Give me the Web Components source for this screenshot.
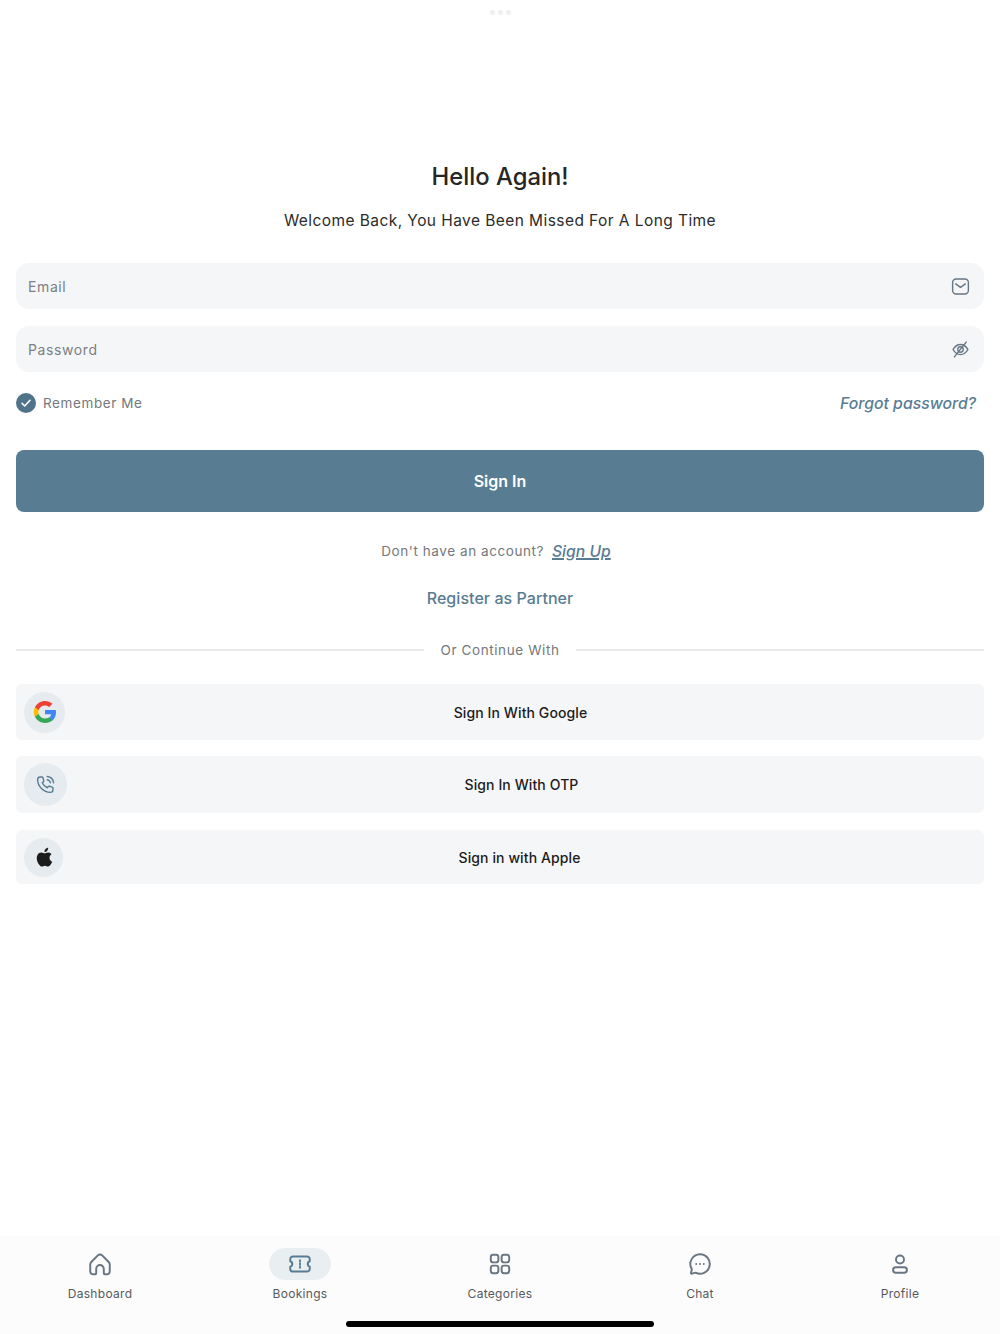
<!DOCTYPE html>
<html lang="en">
<head>
<meta charset="utf-8">
<title>Sign In</title>
<style>
  html, body { margin: 0; background: #fff; }
  body { font-family: Inter, "Liberation Sans", sans-serif; }
</style>
</head>
<body>
<login-screen></login-screen>

<script>
// Shared icon strokes, all drawn on a 24x24 grid
const ICONS = {
    mail: '<rect x="3" y="3.5" width="18" height="17" rx="4"/><path d="M6.5 9l5.5 4 5.500-4"/>',
    eyeOff: '<path d="M3.500 12c2.200-3.900 5-5.800 8.500-5.800s6.300 1.900 8.500 5.800c-2.200 3.900-5 5.800-8.500 5.800S5.700 15.900 3.500 12z"/><circle cx="12" cy="12" r="3.100"/><path d="M18.500 3.500L5 20.500"/>',
    home: '<path d="M4 10.200L10 4a2.800 2.800 0 0 1 4 0l6 6.200c.6.600 1 1.500 1 2.300V19a2.500 2.500 0 0 1-2.500 2.500H17a1.500 1.500 0 0 1-1.500-1.500v-3.500a3.500 3.500 0 0 0-7 0V20A1.500 1.500 0 0 1 7 21.500H5.500A2.500 2.500 0 0 1 3 19v-6.500c0-.8.400-1.700 1-2.300z"/>',
    ticket: '<path d="M5.500 5h13A2.500 2.500 0 0 1 21 7.500v2a2.600 2.600 0 0 0 0 5v2a2.500 2.500 0 0 1-2.500 2.500h-13A2.500 2.500 0 0 1 3 16.500v-2a2.600 2.600 0 0 0 0-5v-2A2.500 2.500 0 0 1 5.500 5z"/><path d="M12 8.500v1M12 11.300v1.400M12 14.500v1"/>',
    grid: '<rect x="3.500" y="3.500" width="7" height="7" rx="2.200"/><rect x="13.500" y="3.500" width="7" height="7" rx="2.200"/><rect x="3.500" y="13.500" width="7" height="7" rx="2.200"/><rect x="13.500" y="13.500" width="7" height="7" rx="2.200"/>',
    chat: '<path d="M12 3a9 9 0 1 1-4.100 17l-3.300.9c-.6.100-1-.300-.900-.900l.8-3.200A9 9 0 0 1 12 3z"/><path d="M8.500 12h.01M12 12h.01M15.500 12h.01"/>',
    user: '<circle cx="12" cy="7.900" r="3.700"/><rect x="5.600" y="15" width="12.800" height="5" rx="2.500"/>',
    phone: '<path d="M6 3.500l2 0c.5 0 .9.300 1 .8l1 3.300c.1.400 0 .8-.3 1.100L8.300 10c1.100 2.400 3.200 4.600 5.700 5.700l1.300-1.400c.3-.3.700-.4 1.100-.3l3.300 1c.5.100.8.500.8 1v2c0 1.700-1.300 3-3 3C10 21 3 14 3 6.500c0-1.700 1.300-3 3-3z"/><path d="M14 6.500c1.900.3 3.200 1.600 3.500 3.500M14 2.800c3.900.4 6.800 3.300 7.200 7.200"/>'
};

function strokeIcon(name, size, color, width) {
    return `<svg width="${size}" height="${size}" viewBox="0 0 24 24" fill="none" stroke="${color}" stroke-width="${width}" stroke-linecap="round" stroke-linejoin="round">${ICONS[name]}</svg>`;
}

const GOOGLE_LOGO = `<svg width="24" height="24" viewBox="0 0 48 48">
    <path fill="#4285F4" d="M46 24.500c0-1.600-.1-3.100-.4-4.500H24v8.700h12.400c-.5 2.800-2.100 5.200-4.500 6.800v5.600h7.300C43.500 36.700 46 31.100 46 24.500z"/>
    <path fill="#34A853" d="M24 46c6.100 0 11.200-2 14.900-5.500l-7.300-5.600c-2 1.400-4.600 2.200-7.600 2.200-5.900 0-10.900-4-12.600-9.300H3.800v5.800C7.500 40.900 15.200 46 24 46z"/>
    <path fill="#FBBC05" d="M11.400 27.800c-.9-2.500-.9-5.100 0-7.600v-5.800H3.800a22 22 0 0 0 0 19.200l7.600-5.800z"/>
    <path fill="#EA4335" d="M24 10.800c3.300 0 6.300 1.100 8.600 3.400l6.500-6.500C35.200 4.100 30.100 2 24 2 15.200 2 7.500 7.100 3.800 14.400l7.600 5.800c1.700-5.400 6.700-9.400 12.600-9.400z"/>
</svg>`;

const APPLE_LOGO = `<svg width="24" height="24" viewBox="0 0 24 24" fill="#1c1c1c">
    <path d="M17.500 12.700c0-2.300 1.900-3.400 2-3.500-1.100-1.600-2.800-1.800-3.400-1.800-1.400-.1-2.800.9-3.500.9-.7 0-1.900-.9-3.100-.9-1.600 0-3.100.9-3.900 2.300-1.700 2.900-.4 7.200 1.200 9.500.8 1.100 1.800 2.400 3 2.400 1.200 0 1.700-.8 3.100-.8 1.500 0 1.900.8 3.100.8 1.300 0 2.100-1.100 2.900-2.300.9-1.300 1.300-2.600 1.300-2.700-.1 0-2.700-1-2.700-3.900z"/>
    <path d="M15.200 5.700c.6-.8 1.100-1.900 1-3-.9 0-2.100.6-2.700 1.400-.6.700-1.100 1.800-1 2.900 1 .1 2-.5 2.700-1.300z"/>
</svg>`;

class LoginField extends HTMLElement {
    connectedCallback() {
        this.attachShadow({ mode: 'open' });
        const icon = this.getAttribute('icon');
        this.shadowRoot.innerHTML = `
            <style>
                :host {
                    display: flex;
                    align-items: center;
                    justify-content: space-between;
                    height: 46px;
                    padding: 0 13px 0 12px;
                    background: #f5f6f8;
                    border-radius: 13px;
                }
                .hint {
                    font-size: 14px;
                    letter-spacing: 0.6px;
                    color: #7b7f83;
                    padding-top: 1px;
                }
                svg { display: block; }
            </style>
            <span class="hint">${this.getAttribute('placeholder')}</span>
            ${strokeIcon(icon, 21, '#687683', 1.6)}
        `;
    }
}

class SocialButton extends HTMLElement {
    connectedCallback() {
        this.attachShadow({ mode: 'open' });
        const size = this.getAttribute('badge') || 41;
        this.shadowRoot.innerHTML = `
            <style>
                :host {
                    display: flex;
                    align-items: center;
                    background: #f5f6f8;
                    border-radius: 6px;
                    padding-left: 8px;
                }
                .badge {
                    width: ${size}px;
                    height: ${size}px;
                    flex: none;
                    display: flex;
                    align-items: center;
                    justify-content: center;
                    background: #e6ebef;
                    border-radius: 50%;
                }
                .label {
                    flex: 1;
                    text-align: center;
                    font-size: 14px;
                    font-weight: 500;
                    letter-spacing: 0.1px;
                    color: #1c1c1c;
                    padding-right: 8px;
                }
                ::slotted([slot="icon"]) { display: block; }
            </style>
            <span class="badge"><slot name="icon"></slot></span>
            <span class="label"><slot></slot></span>
        `;
    }
}

class NavItem extends HTMLElement {
    connectedCallback() {
        this.attachShadow({ mode: 'open' });
        const active = this.hasAttribute('active');
        const color = active ? '#587c92' : '#687683';
        this.shadowRoot.innerHTML = `
            <style>
                :host {
                    flex: 1;
                    display: flex;
                    flex-direction: column;
                    align-items: center;
                    gap: 6px;
                }
                .pill {
                    width: 62px;
                    height: 32px;
                    display: flex;
                    align-items: center;
                    justify-content: center;
                    border-radius: 16px;
                    background: ${active ? '#e9eef1' : 'transparent'};
                }
                .label {
                    font-size: 12px;
                    letter-spacing: 0.3px;
                    color: #56595c;
                    line-height: 16px;
                }
                svg { display: block; }
            </style>
            <span class="pill">${strokeIcon(this.getAttribute('icon'), 26, color, 1.8)}</span>
            <span class="label">${this.getAttribute('label')}</span>
        `;
    }
}

class BottomNav extends HTMLElement {
    connectedCallback() {
        this.attachShadow({ mode: 'open' });
        this.shadowRoot.innerHTML = `
            <style>
                :host {
                    display: block;
                    height: 98px;
                    box-sizing: border-box;
                    padding-top: 12px;
                    background: #fcfcfc;
                }
                .items { display: flex; }
                .home-bar {
                    width: 308px;
                    height: 6px;
                    margin: 19px auto 0;
                    background: #000;
                    border-radius: 3px;
                }
            </style>
            <div class="items"><slot></slot></div>
            <div class="home-bar"></div>
        `;
    }
}

class LoginScreen extends HTMLElement {
    connectedCallback() {
        this.attachShadow({ mode: 'open' });
        this.shadowRoot.innerHTML = `
            <style>
                :host {
                    display: flex;
                    flex-direction: column;
                    height: 1334px;
                    overflow: hidden;
                    font-family: Inter, "Liberation Sans", sans-serif;
                }
                .dots { display: flex; justify-content: center; gap: 3px; padding-top: 10px; }
                .dots i { width: 5px; height: 5px; border-radius: 50%; background: #efefef; }
                main {
                    flex: 1;
                    display: flex;
                    flex-direction: column;
                    padding: 0 16px;
                }
                h1 {
                    margin: 146px 0 0;
                    text-align: center;
                    font-size: 23.800px;
                    line-height: 32px;
                    font-weight: 500;
                    color: #262626;
                }
                .sub {
                    margin: 17px 0 0;
                    text-align: center;
                    font-size: 15.500px;
                    line-height: 22px;
                    letter-spacing: 0.43px;
                    color: #2b2b2b;
                }
                .fields { display: flex; flex-direction: column; gap: 17px; margin-top: 31px; }
                .options {
                    display: flex;
                    justify-content: space-between;
                    align-items: center;
                    margin-top: 21px;
                    padding-right: 8px;
                }
                .remember {
                    display: flex;
                    align-items: center;
                    gap: 7px;
                    font-size: 13.500px;
                    letter-spacing: 0.6px;
                    color: #74787c;
                }
                .check {
                    width: 20px;
                    height: 20px;
                    border-radius: 50%;
                    background: #4f7388;
                    display: flex;
                    align-items: center;
                    justify-content: center;
                }
                .forgot {
                    font-size: 15.800px;
                    font-style: italic;
                    font-weight: 500;
                    color: #587c92;
                }
                .sign-in {
                    display: flex;
                    align-items: center;
                    justify-content: center;
                    height: 62px;
                    margin-top: 37px;
                    border-radius: 8px;
                    background: #587c92;
                    color: #fff;
                    font-size: 16px;
                    font-weight: 600;
                }
                .signup {
                    display: flex;
                    justify-content: center;
                    align-items: center;
                    gap: 8px;
                    margin-top: 28px;
                    padding-right: 8px;
                    height: 22px;
                    font-size: 13.500px;
                    letter-spacing: 0.57px;
                    color: #74787c;
                }
                .signup a {
                    font-size: 15.700px;
                    letter-spacing: 0;
                    font-style: italic;
                    font-weight: 500;
                    color: #587c92;
                    text-decoration: underline;
                    text-decoration-thickness: 1.500px;
                }
                .partner {
                    margin-top: 25px;
                    text-align: center;
                    font-size: 16px;
                    line-height: 22px;
                    font-weight: 500;
                    letter-spacing: 0.05px;
                    color: #587c92;
                }
                .divider {
                    display: flex;
                    align-items: center;
                    gap: 16px;
                    margin-top: 30px;
                    font-size: 13.500px;
                    line-height: 22px;
                    letter-spacing: 0.6px;
                    color: #74787c;
                }
                .divider::before, .divider::after {
                    content: "";
                    flex: 1;
                    height: 2px;
                    background: #e9e9e9;
                }
                .social { display: flex; flex-direction: column; margin-top: 23px; }
                .social svg { display: block; }
                social-button:nth-child(1) { height: 56px; }
                social-button:nth-child(2) { height: 57px; margin-top: 16px; }
                social-button:nth-child(3) { height: 54px; margin-top: 17px; }
            </style>
            <div class="dots"><i></i><i></i><i></i></div>
            <main>
                <h1>Hello Again!</h1>
                <p class="sub">Welcome Back, You Have Been Missed For A Long Time</p>
                <div class="fields">
                    <login-field placeholder="Email" icon="mail"></login-field>
                    <login-field placeholder="Password" icon="eyeOff"></login-field>
                </div>
                <div class="options">
                    <label class="remember">
                        <span class="check"><svg width="12" height="12" viewBox="0 0 12 12" fill="none" stroke="#fff" stroke-width="1.600" stroke-linecap="round" stroke-linejoin="round"><path d="M2 6.300l2.700 2.700L10 3.300"/></svg></span>
                        Remember Me
                    </label>
                    <span class="forgot">Forgot password?</span>
                </div>
                <div class="sign-in">Sign In</div>
                <div class="signup"><span>Don't have an account?</span><a>Sign Up</a></div>
                <div class="partner">Register as Partner</div>
                <div class="divider">Or Continue With</div>
                <div class="social">
                    <social-button badge="41"><span slot="icon">${GOOGLE_LOGO}</span>Sign In With Google</social-button>
                    <social-button badge="43"><span slot="icon">${strokeIcon('phone', 21, '#587c92', 1.600)}</span>Sign In With OTP</social-button>
                    <social-button badge="39"><span slot="icon">${APPLE_LOGO}</span>Sign in with Apple</social-button>
                </div>
            </main>
            <bottom-nav>
                <nav-item icon="home" label="Dashboard"></nav-item>
                <nav-item icon="ticket" label="Bookings" active></nav-item>
                <nav-item icon="grid" label="Categories"></nav-item>
                <nav-item icon="chat" label="Chat"></nav-item>
                <nav-item icon="user" label="Profile"></nav-item>
            </bottom-nav>
        `;
    }
}

customElements.define('login-field', LoginField);
customElements.define('social-button', SocialButton);
customElements.define('nav-item', NavItem);
customElements.define('bottom-nav', BottomNav);
customElements.define('login-screen', LoginScreen);
</script>
</body>
</html>
